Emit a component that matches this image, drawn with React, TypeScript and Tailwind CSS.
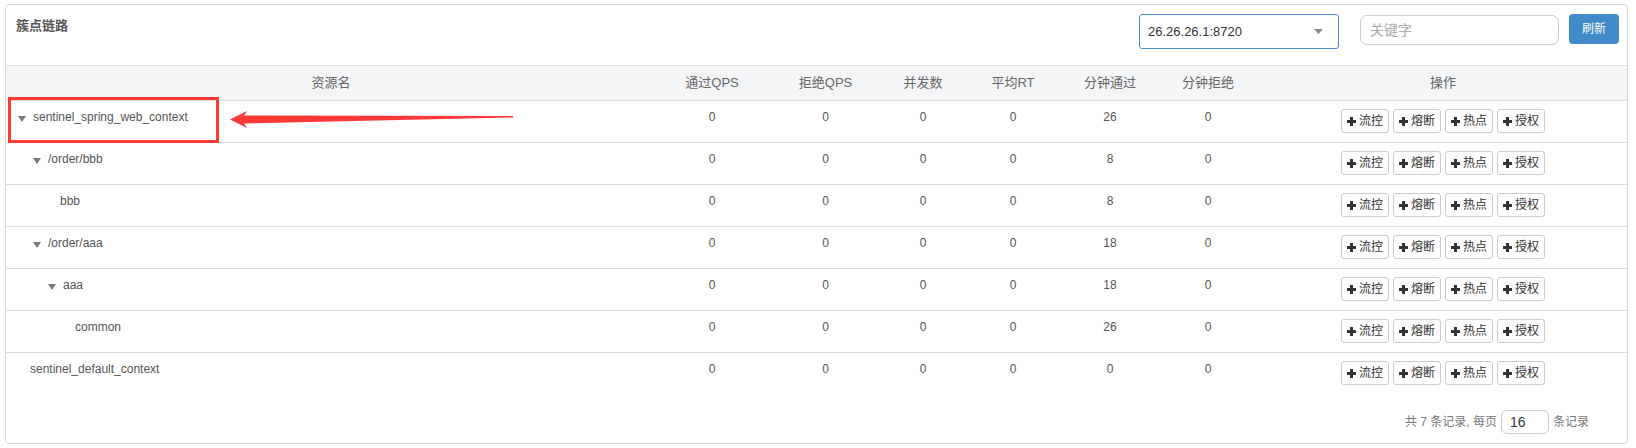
import { ReactNode } from "react";

type TreeRow = {
  name: string;
  level: number;
  open?: boolean;
  minPass: number;
};

const rows: TreeRow[] = [
  { name: "sentinel_spring_web_context", level: 0, open: true, minPass: 26 },
  { name: "/order/bbb", level: 1, open: true, minPass: 8 },
  { name: "bbb", level: 2, minPass: 8 },
  { name: "/order/aaa", level: 1, open: true, minPass: 18 },
  { name: "aaa", level: 2, open: true, minPass: 18 },
  { name: "common", level: 3, minPass: 26 },
  { name: "sentinel_default_context", level: 0, minPass: 0 },
];

const indent = ["pl-[12px]", "pl-[27px]", "pl-[42px]", "pl-[57px]"];

const columns = ["资源名", "通过QPS", "拒绝QPS", "并发数", "平均RT", "分钟通过", "分钟拒绝", "操作"];

const actions = ["流控", "熔断", "热点", "授权"];

const gridCols = "grid grid-cols-[650px_112px_115px_80px_100px_94px_102px_1fr]";

function PlusIcon() {
  return (
    <svg width="9" height="9" viewBox="0 0 9 9" className="shrink-0">
      <rect x="0" y="3" width="9" height="3" fill="#333" />
      <rect x="3" y="0" width="3" height="9" fill="#333" />
    </svg>
  );
}

function Caret() {
  return (
    <svg width="8" height="6" viewBox="0 0 8 6" className="mt-[7px] shrink-0">
      <polygon points="0,0 8,0 4,6" fill="#7a7a7a" />
    </svg>
  );
}

function ActionButton({ children }: { children: ReactNode }) {
  return (
    <button className="flex h-[24px] w-[48px] items-center justify-center gap-[3px] rounded-[3px] border border-[#cccccc] bg-white text-[12px] leading-none text-[#333]">
      <PlusIcon />
      <span>{children}</span>
    </button>
  );
}

function Cell({ children }: { children: ReactNode }) {
  return <div className="pt-[8px] text-center leading-[17px]">{children}</div>;
}

export default function App() {
  return (
    <div className="relative h-[448px] w-[1636px] bg-white pl-[5px] pt-[4px] font-['Liberation_Sans','Noto_Sans_CJK_SC',sans-serif] text-[12px] text-[#555]">
      <div className="w-[1623px] rounded-[4px] border border-[#d9d9d9] bg-white">
        {/* toolbar */}
        <div className="flex h-[60px] items-start justify-between pl-[10px] pr-[8px] pt-[9px]">
          <h3 className="pt-[3px] text-[13px] font-bold leading-[18px] text-[#555]">簇点链路</h3>
          <div className="flex items-start">
            <div className="flex h-[35px] w-[200px] items-center justify-between rounded-[3px] border border-[#4a8bc9] pl-[8px] pr-[15px] text-[13px] text-[#333]">
              <span>26.26.26.1:8720</span>
              <svg width="9" height="5" viewBox="0 0 9 5">
                <polygon points="0,0 9,0 4.5,5" fill="#888" />
              </svg>
            </div>
            <input
              placeholder="关键字"
              className="ml-[21px] mt-[1px] h-[30px] w-[199px] rounded-[7px] border border-[#cccccc] px-[9px] text-[14px] text-[#333] outline-none placeholder:text-[#aaa]"
            />
            <button className="ml-[10px] h-[30px] w-[50px] rounded-[4px] bg-[#428bca] text-[12px] text-white">刷新</button>
          </div>
        </div>

        {/* table head */}
        <div className={`${gridCols} h-[35px] items-center border-t border-[#dddddd] bg-[#f4f5f7] text-[13px] text-[#666]`}>
          {columns.map((c) => (
            <div key={c} className="text-center">
              {c}
            </div>
          ))}
        </div>

        {/* table body */}
        {rows.map((r) => (
          <div key={r.name} className={`${gridCols} h-[42px] border-t border-[#dddddd]`}>
            <div className={`flex items-start pt-[8px] leading-[17px] ${indent[r.level]}`}>
              {r.open ? (
                <>
                  <Caret />
                  <span className="ml-[7px]">{r.name}</span>
                </>
              ) : (
                <span className="ml-[12px]">{r.name}</span>
              )}
            </div>
            <Cell>0</Cell>
            <Cell>0</Cell>
            <Cell>0</Cell>
            <Cell>0</Cell>
            <Cell>{r.minPass}</Cell>
            <Cell>0</Cell>
            <div className="flex justify-center gap-[4px] pt-[8px]">
              {actions.map((a) => (
                <ActionButton key={a}>{a}</ActionButton>
              ))}
            </div>
          </div>
        ))}

        {/* pager */}
        <div className="flex items-center justify-end pb-[9px] pr-[38px] pt-[16px] text-[12px] text-[#777]">
          <span>共 7 条记录, 每页</span>
          <input
            defaultValue="16"
            className="mx-[4px] h-[24px] w-[48px] rounded-[6px] border border-[#cccccc] px-[8px] text-[14px] text-[#333] outline-none"
          />
          <span>条记录</span>
        </div>
      </div>

      {/* highlight box + arrow */}
      <div className="absolute left-[8px] top-[97px] h-[46px] w-[211px] border-[3px] border-[#ff3838]" />
      <svg className="absolute left-[228px] top-[108px]" width="290" height="24" viewBox="228 108 290 24">
        <polygon
          points="230,119.5 247,111 244,115.5 513,116 513,117.4 244,123.5 247,128"
          fill="#ff3838"
        />
      </svg>
    </div>
  );
}
